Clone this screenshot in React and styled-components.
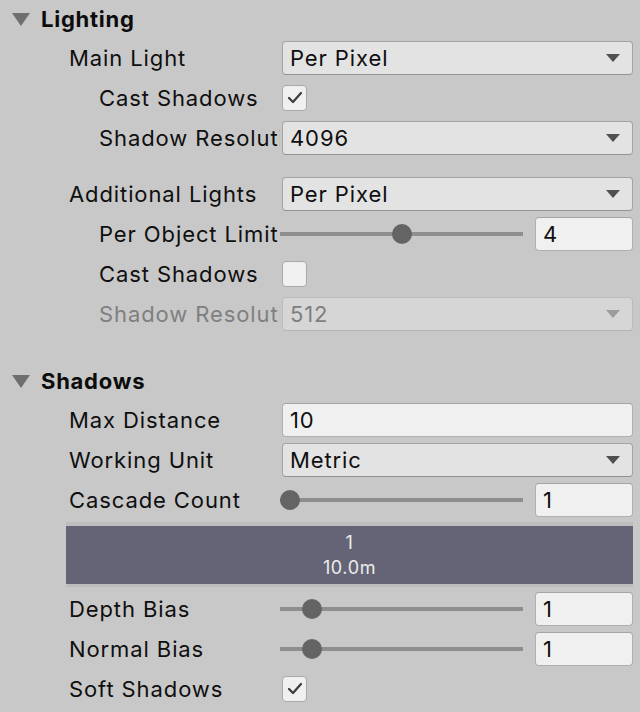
import React from 'react';
import styled, { createGlobalStyle } from 'styled-components';

const GlobalStyle = createGlobalStyle`
    body {
        margin: 0;
        background: #c8c8c8;
        font-family: Inter, "Noto Sans", sans-serif;
        color: #0f0f0f;
        letter-spacing: 0.9px;
    }
`;

const Panel = styled.div`
    width: 640px;
    height: 712px;
    overflow: hidden;
    display: flex;
    flex-direction: column;
`;

const Header = styled.div`
    height: 38px;
    display: flex;
    align-items: center;
    gap: 11px;
    padding-left: 12px;
    margin-top: ${(p) => p.top || 0}px;
    font-size: 22px;
    font-weight: 700;
    letter-spacing: 0.75px;
    color: #0c0c0c;
`;

const Fold = styled.div`
    width: 0;
    height: 0;
    border-left: 9px solid transparent;
    border-right: 9px solid transparent;
    border-top: 13px solid #6f6f6f;
`;

const Row = styled.div`
    height: 40px;
    display: grid;
    grid-template-columns: 282px 1fr;
    align-items: center;
    padding-right: 7px;
    margin-top: ${(p) => p.top || 0}px;
`;

const Label = styled.div`
    padding-left: ${(p) => p.indent}px;
    margin-right: 2px;
    font-size: 22px;
    white-space: nowrap;
    overflow: hidden;
    text-overflow: clip;
    color: ${(p) => (p.disabled ? '#7f7f7f' : '#0f0f0f')};
`;

const Dropdown = styled.div`
    height: 34px;
    box-sizing: border-box;
    display: flex;
    align-items: center;
    justify-content: space-between;
    padding: 0 12px 0 7px;
    border: 1px solid ${(p) => (p.disabled ? '#bcbcbc' : '#a3a3a3')};
    border-bottom-color: ${(p) => (p.disabled ? '#b4b4b4' : '#939393')};
    border-radius: 4px;
    background: ${(p) => (p.disabled ? '#d6d6d6' : '#e3e3e3')};
    font-size: 22px;
    color: ${(p) => (p.disabled ? '#7f7f7f' : '#0f0f0f')};
`;

const Arrow = styled.div`
    width: 0;
    height: 0;
    border-left: 7px solid transparent;
    border-right: 7px solid transparent;
    border-top: 8px solid ${(p) => (p.disabled ? '#9c9c9c' : '#4f4f4f')};
`;

const TextField = styled.div`
    height: 34px;
    box-sizing: border-box;
    display: flex;
    align-items: center;
    padding: 0 7px;
    border: 1px solid #b0b0b0;
    border-top-color: #a4a4a4;
    border-radius: 4px;
    background: #f0f0f0;
    font-size: 22px;
`;

const Check = styled.div`
    width: 25px;
    height: 26px;
    box-sizing: border-box;
    border: 1px solid #a9a9a9;
    border-radius: 4px;
    background: #f0f0f0;
    display: flex;
    align-items: center;
    justify-content: center;
`;

const SliderField = styled.div`
    display: flex;
    align-items: center;
    gap: 12px;
    margin-left: -2px;
`;

const Track = styled.div`
    position: relative;
    width: 243px;
    height: 20px;
    display: flex;
    align-items: center;
    &::before {
        content: '';
        width: 100%;
        height: 4px;
        background: #8e8e8e;
    }
`;

const Thumb = styled.div`
    position: absolute;
    top: 0;
    width: 20px;
    height: 20px;
    border-radius: 50%;
    background: #646464;
`;

const NumberField = styled(TextField)`
    width: 98px;
`;

const CascadeBar = styled.div`
    margin: 2px 7px 2px 66px;
    padding: 4px 0 3px;
    background: #bdbdbd;
`;

const CascadeInner = styled.div`
    height: 58px;
    background: #646476;
    color: #ececec;
    font-size: 18px;
    letter-spacing: 0.6px;
    display: flex;
    flex-direction: column;
    align-items: center;
    justify-content: center;
    line-height: 25px;
`;

const Tick = () => (
    <svg width="16" height="14" viewBox="0 0 16 14">
        <polyline
            points="2,7 6,11 14,2"
            fill="none"
            stroke="#3c3c3c"
            strokeWidth="2.2"
            strokeLinecap="round"
            strokeLinejoin="round"
        />
    </svg>
);

const Field = ({ label, indent = 69, disabled, top, children }) => (
    <Row top={top}>
        <Label indent={indent} disabled={disabled}>
            {label}
        </Label>
        {children}
    </Row>
);

const Select = ({ value, disabled }) => (
    <Dropdown disabled={disabled}>
        {value}
        <Arrow disabled={disabled} />
    </Dropdown>
);

const Slider = ({ value, min, max }) => {
    const frac = (value - min) / (max - min);
    return (
        <SliderField>
            <Track>
                <Thumb style={{ left: `${frac * 223}px` }} />
            </Track>
            <NumberField>{value}</NumberField>
        </SliderField>
    );
};

const Toggle = ({ checked }) => <Check>{checked && <Tick />}</Check>;

const App = () => {
    return (
        <Panel>
            <GlobalStyle />
            <Header>
                <Fold />
                Lighting
            </Header>
            <Field label="Main Light">
                <Select value="Per Pixel" />
            </Field>
            <Field label="Cast Shadows" indent={99}>
                <Toggle checked />
            </Field>
            <Field label="Shadow Resolution" indent={99}>
                <Select value="4096" />
            </Field>
            <Field label="Additional Lights" top={16}>
                <Select value="Per Pixel" />
            </Field>
            <Field label="Per Object Limit" indent={99}>
                <Slider value={4} min={0} max={8} />
            </Field>
            <Field label="Cast Shadows" indent={99}>
                <Toggle />
            </Field>
            <Field label="Shadow Resolution" indent={99} disabled>
                <Select value="512" disabled />
            </Field>

            <Header top={28}>
                <Fold />
                Shadows
            </Header>
            <Field label="Max Distance">
                <TextField>10</TextField>
            </Field>
            <Field label="Working Unit">
                <Select value="Metric" />
            </Field>
            <Field label="Cascade Count">
                <Slider value={1} min={1} max={4} />
            </Field>
            <CascadeBar>
                <CascadeInner>
                    <span>1</span>
                    <span>10.0m</span>
                </CascadeInner>
            </CascadeBar>
            <Field label="Depth Bias">
                <Slider value={1} min={0} max={10} />
            </Field>
            <Field label="Normal Bias">
                <Slider value={1} min={0} max={10} />
            </Field>
            <Field label="Soft Shadows">
                <Toggle checked />
            </Field>
        </Panel>
    );
};

export default App;
